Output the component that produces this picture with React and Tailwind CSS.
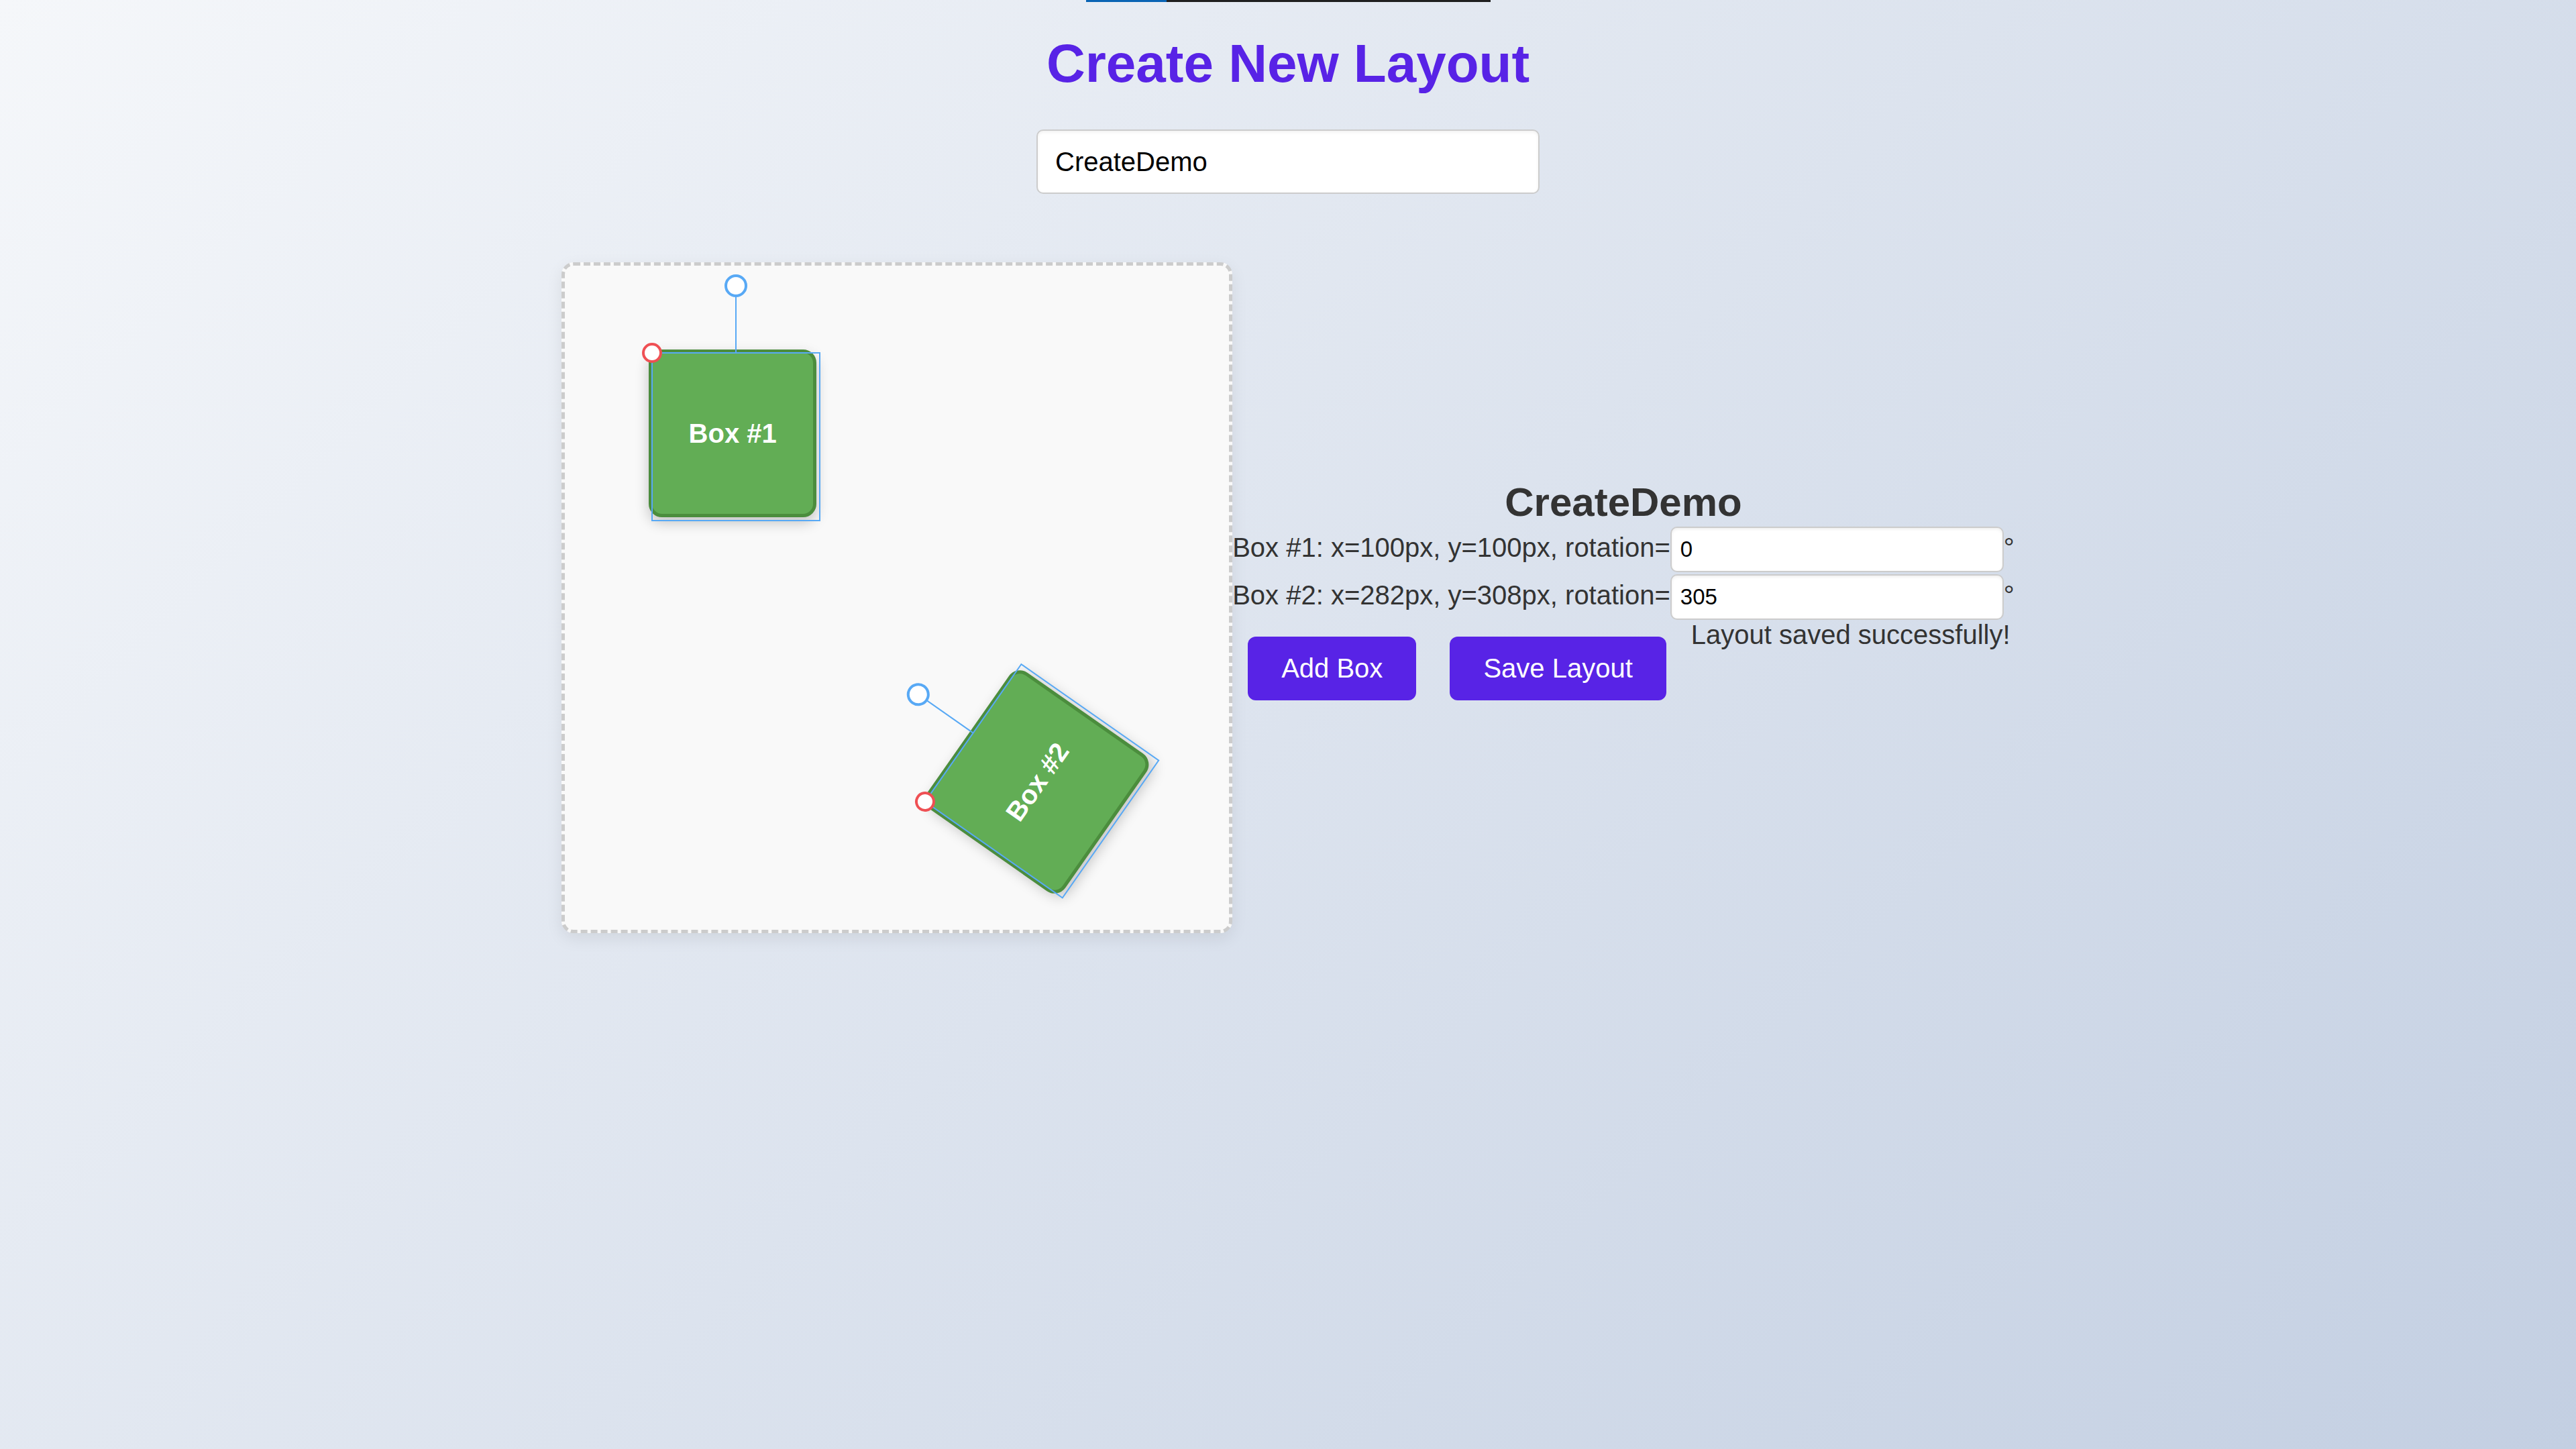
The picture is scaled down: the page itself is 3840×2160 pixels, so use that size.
import React from 'react';

// Boxes placed on the free canvas: frame position (top-left corner) and rotation.
const boxes = [
  { id: 1, label: 'Box #1', left: 130, top: 130, rotation: 0 },
  { id: 2, label: 'Box #2', left: 537, top: 799, rotation: -55 },
];

const rows = [
  { id: 1, text: 'Box #1: x=100px, y=100px, rotation=', value: '0' },
  { id: 2, text: 'Box #2: x=282px, y=308px, rotation=', value: '305' },
];

function Box({ label, left, top, rotation }) {
  return (
    <div
      className="absolute h-[250px] w-[250px] origin-top-left"
      style={{ left, top, transform: `rotate(${rotation}deg)` }}
    >
      <div className="absolute left-[-5px] top-[-5px] flex h-[250px] w-[250px] items-center justify-center rounded-[20px] border-[5px] border-[#4b8d3d] bg-[#62ad55] text-[40px] font-bold text-white shadow-[0_8px_20px_rgba(0,0,0,0.22)]">
        {label}
      </div>
      {/* transformer frame + handles */}
      <div className="absolute left-[-1px] top-[-1px] h-[252px] w-[252px] border-2 border-[#58a9f5]" />
      <div className="absolute left-[124px] top-[-84px] h-[84px] w-[2px] bg-[#58a9f5]" />
      <div className="absolute left-[108px] top-[-117px] h-[34px] w-[34px] rounded-full border-4 border-[#58a9f5] bg-white" />
      <div className="absolute left-[-15px] top-[-15px] h-[30px] w-[30px] rounded-full border-4 border-[#ef5054] bg-white" />
    </div>
  );
}

export default function App() {
  return (
    <div className="min-h-screen w-full bg-[linear-gradient(135deg,#f5f7fa_0%,#c3cfe2_100%)] font-['Liberation_Sans',Arial,sans-serif] leading-[normal] text-[#333]">
      <div className="flex justify-center">
        <div className="flex h-[3px] w-[603px]">
          <div className="w-[120px] bg-[#0a64b4]" />
          <div className="flex-1 bg-[#1f1f1f]" />
        </div>
      </div>

      <h1 className="mt-[46px] text-center text-[80px] font-bold leading-[92px] text-[#5823e6]">Create New Layout</h1>

      <div className="mt-[52px] flex justify-center">
        <input
          type="text"
          defaultValue="CreateDemo"
          className="h-[96px] w-[750px] rounded-[10px] border-2 border-[#ccc] bg-white px-[26px] text-[40px] text-black shadow-[inset_0_2px_5px_rgba(0,0,0,0.06)] outline-none"
        />
      </div>

      <div className="mt-[102px] flex items-center justify-center">
        <div className="relative h-[1000px] w-[1000px] shrink-0 rounded-[18px] border-[5px] border-dashed border-[#ccc] bg-[#f9f9f9] shadow-[0_8px_25px_rgba(0,0,0,0.08)]">
          {boxes.map(b => (
            <Box key={b.id} {...b} />
          ))}
        </div>

        <div className="flex flex-col">
          <h2 className="mb-[2px] text-center text-[60px] font-bold leading-[69px] text-[#333]">CreateDemo</h2>
          {rows.map((r, i) => (
            <div key={r.id} className={i > 0 ? 'mt-[3px] flex items-baseline' : 'flex items-baseline'}>
              <span className="text-[40px] text-[#333]">{r.text}</span>
              <input
                type="text"
                defaultValue={r.value}
                className="h-[68px] w-[497px] rounded-[10px] border-2 border-[#ccc] bg-white px-[13px] text-[33px] text-black shadow-[inset_0_2px_4px_rgba(0,0,0,0.07)] outline-none"
              />
              <span className="text-[40px] text-[#333]">°</span>
            </div>
          ))}
          <div className="flex items-start">
            <button className="m-[25px] ml-[23px] h-[95px] rounded-[12px] bg-[#5823e6] px-[50px] text-[40px] text-white">Add Box</button>
            <button className="m-[25px] h-[95px] rounded-[12px] bg-[#5823e6] px-[50px] text-[40px] text-white">Save Layout</button>
            <p className="ml-[12px] whitespace-nowrap text-[40px] text-[#333]">Layout saved successfully!</p>
          </div>
        </div>
      </div>
    </div>
  );
}
